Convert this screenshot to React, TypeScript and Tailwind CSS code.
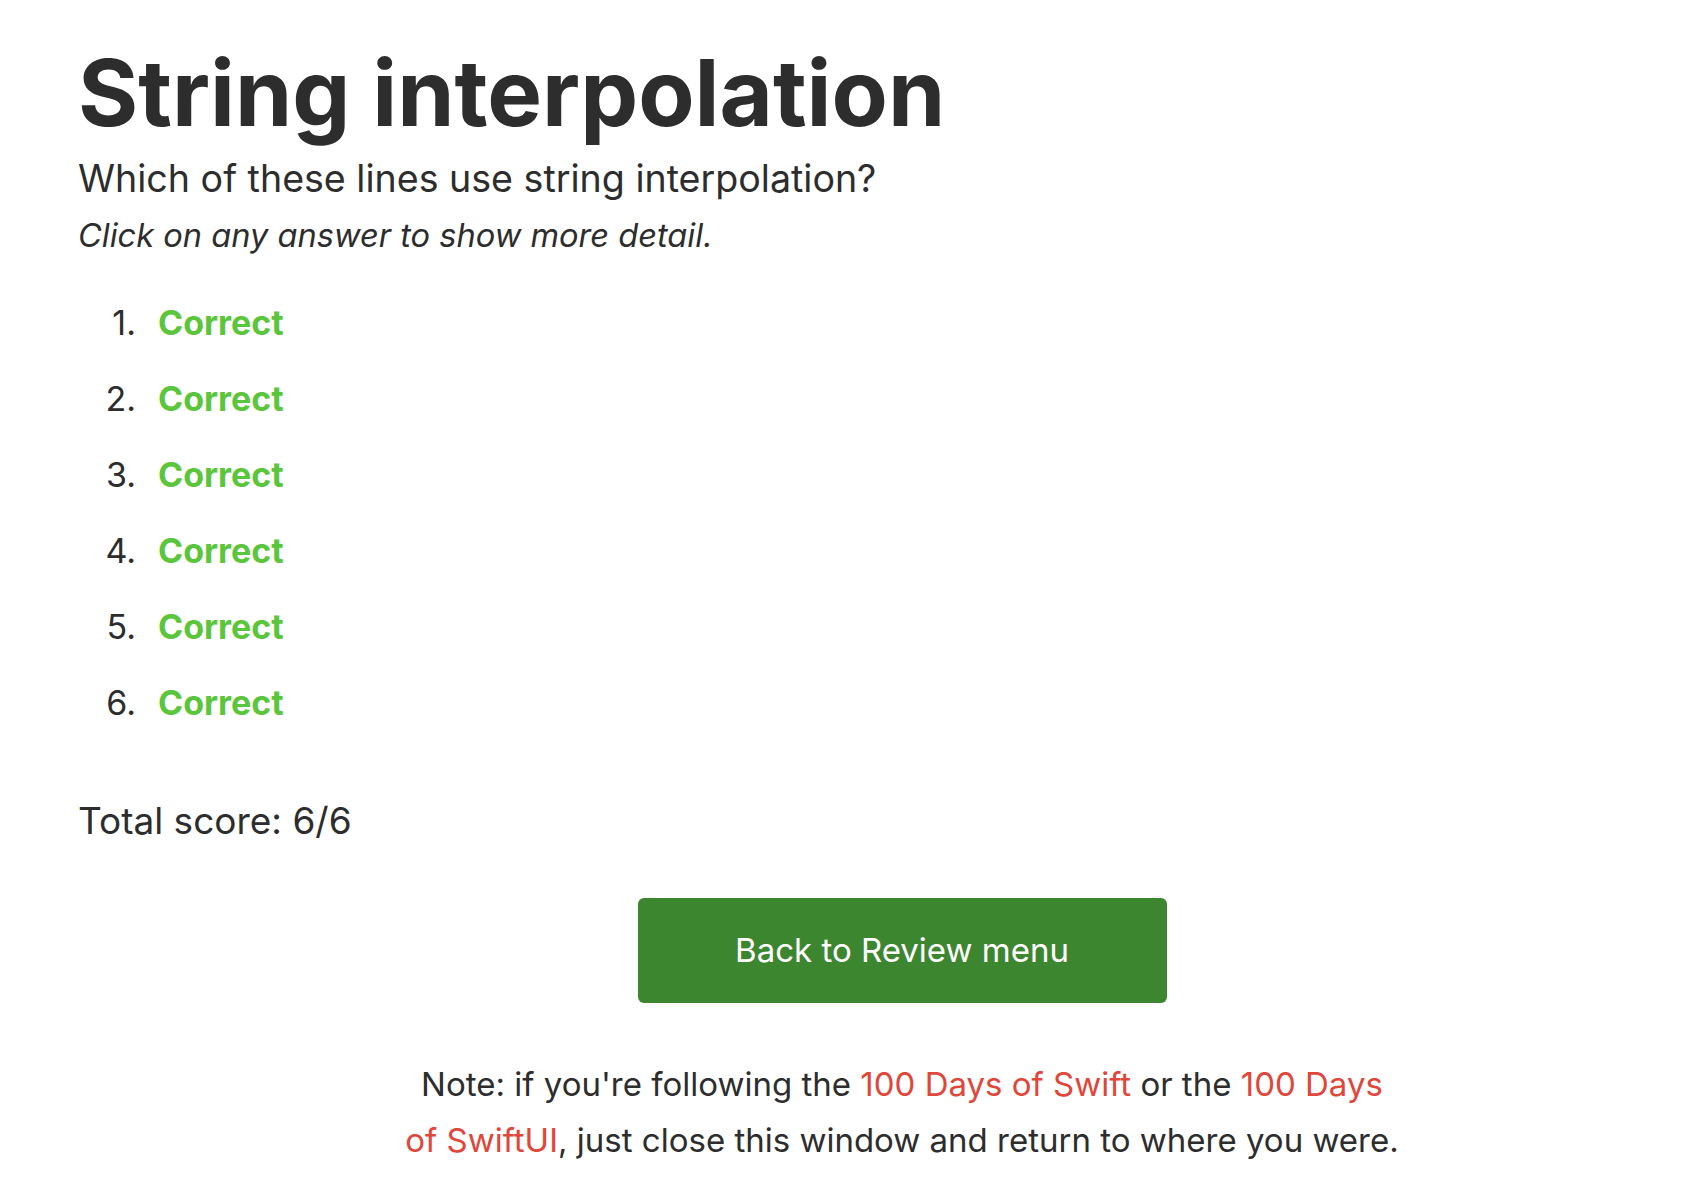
export default function App() {
    const answers = [1, 2, 3, 4, 5, 6];

    return (
        <div className="min-h-[1180px] bg-white overflow-hidden pl-[78px] text-[#2d2d2d] font-['Inter','Liberation_Sans',sans-serif]">
            <h1 className="pt-[47px] text-[92px] leading-[92px] font-bold">String interpolation</h1>
            <p className="mt-[18px] text-[37.6px] leading-[44px]">Which of these lines use string interpolation?</p>
            <p className="mt-[14px] text-[32.6px] leading-[40px] italic">Click on any answer to show more detail.</p>

            <ol className="mt-[48px] flex flex-col gap-[36px]">
                {answers.map((n) => (
                    <li key={n} className="flex text-[34px] leading-[40px]">
                        <span className="w-[80px] text-right pr-[22px]">{n}.</span>
                        <span className="font-bold text-[#5bc63c] cursor-pointer">Correct</span>
                    </li>
                ))}
            </ol>

            <p className="mt-[76px] text-[37px] leading-[44px]">Total score: 6/6</p>

            {/* Button and note are centred on a wider column than the viewport */}
            <div className="w-[1648px] flex flex-col items-center">
                <button className="mt-[55px] w-[529px] h-[105px] rounded-[6px] bg-[#3d8630] text-white text-[33px] flex items-center justify-center">
                    Back to Review menu
                </button>
                <p className="mt-[53px] text-[33px] leading-[56px] text-center whitespace-nowrap">
                    Note: if you're following the <a className="text-[#e0463a]" href="#">100 Days of Swift</a> or the <a className="text-[#e0463a]" href="#">100 Days
                    <br />
                    of SwiftUI</a>, just close this window and return to where you were.
                </p>
            </div>
        </div>
    );
}
